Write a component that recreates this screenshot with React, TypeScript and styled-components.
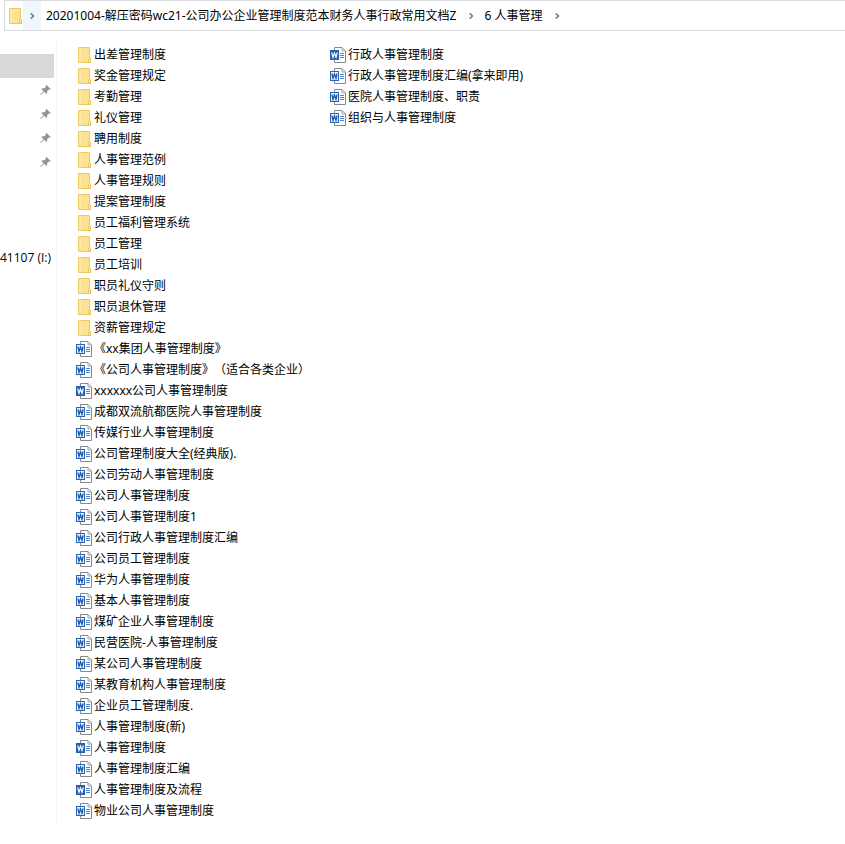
import React from "react";
import styled, { createGlobalStyle } from "styled-components";

const GlobalStyle = createGlobalStyle`
  * { box-sizing: border-box; }
  body {
    margin: 0;
    background: #fff;
    color: #000;
    font: 12px/20px "Noto Sans", "Noto Sans CJK SC", sans-serif;
    text-spacing-trim: space-all;
    overflow-x: hidden;
  }
  button, a {
    font: inherit;
    color: inherit;
    background: none;
    border: 0;
    padding: 0;
    text-decoration: none;
    white-space: nowrap;
    cursor: default;
  }
  button { text-spacing-trim: space-all; }
  ul { list-style: none; margin: 0; padding: 0; }
  svg { display: block; flex: none; }
`;

const Window = styled.div`
  display: flex;
  flex-direction: column;
`;

const AddressBar = styled.nav`
  display: flex;
  align-items: center;
  height: 31px;
  margin-left: 4px;
  padding-left: 2px;
  border: 1px solid #d9dbde;
  border-right: 0;
`;

const ChevronButton = styled.button<{ $active?: boolean }>`
  display: flex;
  align-items: center;
  justify-content: center;
  width: ${(p) => (p.$active ? 18 : 25)}px;
  height: 29px;
  background: ${(p) => (p.$active ? "#f0f6fd" : "none")};
`;

const Crumb = styled.button<{ $first?: boolean }>`
  padding-left: ${(p) => (p.$first ? 5 : 0)}px;
  padding-right: 3px;
`;

const Body = styled.div`
  display: flex;
  margin-top: 8px;
`;

const Sidebar = styled.aside`
  flex: none;
  width: 57px;
  padding-top: 15px;
  border-right: 1px solid #f3f4f5;
  overflow: hidden;
`;

const SidebarRow = styled.a<{ $selected?: boolean }>`
  display: flex;
  align-items: center;
  justify-content: flex-end;
  height: 24px;
  margin-right: 2px;
  padding-right: 3px;
  font-family: "Open Sans", sans-serif;
  background: ${(p) => (p.$selected ? "#d9d9d9" : "none")};
`;

const Files = styled.ul`
  display: grid;
  grid-auto-flow: column;
  grid-template-rows: repeat(37, 21px);
  grid-auto-columns: 254px;
  padding: 5px 0 3px 19px;
`;

const FileButton = styled.button`
  display: flex;
  align-items: center;
  gap: 2px;
  height: 21px;
`;

const Chevron = () => (
  <svg width="7" height="8" viewBox="0 0 7 8" fill="none" stroke="#777" strokeWidth="1.5">
    <path d="M1.7 1.2 L4.5 4 L1.7 6.8" />
  </svg>
);

const FolderIcon = () => (
  <svg width="16" height="16" viewBox="0 0 16 16">
    <path d="M2.5.5H13.5V11L14.5 11.5V15.5H2.5Z" fill="#fde391" stroke="#ecca62" />
    <path d="M3 1H5V15H3Z" fill="#ffeaa8" />
    <path d="M12.5 15.5V11.5L13.5 10.5L14.5 11.5V15.5Z" fill="#ffe99f" stroke="#e3be50" strokeWidth=".8" />
  </svg>
);

const WordIcon = ({ legacy }: { legacy: boolean }) => (
  <svg width="16" height="16" viewBox="0 0 16 16">
    <path d="M4.5.5H12L15.5 4V15.5H4.5Z" fill="#fff" stroke="#85898e" />
    <path d="M12 1V4H15" fill="none" stroke="#a2a5a9" />
    <path d="M10 6.5H14M10 8.5H14M10 10.5H14" stroke="#4a83c9" />
    {legacy ? (
      <>
        <rect x=".5" y="3.5" width="8" height="9" fill="#e9f1fa" stroke="#2b65b5" />
        <path d="M1.9 5.5L3 10.3L4.5 6L6 10.3L7.1 5.5" fill="none" stroke="#1f58a9" strokeWidth="1.3" />
      </>
    ) : (
      <>
        <rect y="3" width="9" height="10" fill="#2360b5" />
        <path d="M1.7 5.5L3 10.3L4.5 6L6 10.3L7.3 5.5" fill="none" stroke="#fff" strokeWidth="1.2" />
      </>
    )}
  </svg>
);

const PinIcon = () => (
  <svg width="11" height="12" viewBox="0 0 12 12">
    <path d="M7 .6L11.4 5L10.2 5.6L9.4 5.3L7.6 7.3L7.5 9.5L6.6 9.9L4.4 7.7L1 11.2L.6 11.4L.8 11L4.1 7.4L2 5.3L2.5 4.4L4.8 4.3L6.7 2.6L6.3 1.7Z" fill="#89939d" stroke="#89939d" strokeWidth=".4" />
  </svg>
);

type Kind = "folder" | "doc" | "docx";

const folders = [
  "出差管理制度", "奖金管理规定", "考勤管理", "礼仪管理", "聘用制度",
  "人事管理范例", "人事管理规则", "提案管理制度", "员工福利管理系统",
  "员工管理", "员工培训", "职员礼仪守则", "职员退休管理", "资薪管理规定",
];

const documents: [string, Kind][] = [
  ["《xx集团人事管理制度》", "doc"],
  ["《公司人事管理制度》（适合各类企业）", "doc"],
  ["xxxxxx公司人事管理制度", "docx"],
  ["成都双流航都医院人事管理制度", "doc"],
  ["传媒行业人事管理制度", "doc"],
  ["公司管理制度大全(经典版).", "doc"],
  ["公司劳动人事管理制度", "doc"],
  ["公司人事管理制度", "doc"],
  ["公司人事管理制度1", "doc"],
  ["公司行政人事管理制度汇编", "doc"],
  ["公司员工管理制度", "doc"],
  ["华为人事管理制度", "doc"],
  ["基本人事管理制度", "doc"],
  ["煤矿企业人事管理制度", "doc"],
  ["民营医院-人事管理制度", "doc"],
  ["某公司人事管理制度", "doc"],
  ["某教育机构人事管理制度", "doc"],
  ["企业员工管理制度.", "doc"],
  ["人事管理制度(新)", "doc"],
  ["人事管理制度", "docx"],
  ["人事管理制度汇编", "doc"],
  ["人事管理制度及流程", "docx"],
  ["物业公司人事管理制度", "doc"],
  ["行政人事管理制度", "docx"],
  ["行政人事管理制度汇编(拿来即用)", "doc"],
  ["医院人事管理制度、职责", "doc"],
  ["组织与人事管理制度", "doc"],
];

const entries: [string, Kind][] = [
  ...folders.map((name): [string, Kind] => [name, "folder"]),
  ...documents,
];

const sidebarRows = ["selected", "pin", "pin", "pin", "pin", "", "", "", "drive"];

export default function App() {
  return (
    <Window>
      <GlobalStyle />
      <AddressBar>
        <FolderIcon />
        <ChevronButton $active aria-label="展开"><Chevron /></ChevronButton>
        <Crumb $first>20201004-解压密码wc21-公司办公企业管理制度范本财务人事行政常用文档Z</Crumb>
        <ChevronButton aria-label="展开"><Chevron /></ChevronButton>
        <Crumb>6 人事管理</Crumb>
        <ChevronButton aria-label="展开"><Chevron /></ChevronButton>
      </AddressBar>
      <Body>
        <Sidebar>
          {sidebarRows.map((row, i) => (
            <SidebarRow key={i} href="#" $selected={row === "selected"}>
              {row === "pin" && <PinIcon />}
              {row === "drive" && "41107 (I:)"}
            </SidebarRow>
          ))}
        </Sidebar>
        <Files>
          {entries.map(([name, kind]) => (
            <li key={name}>
              <FileButton>
                {kind === "folder" ? <FolderIcon /> : <WordIcon legacy={kind === "doc"} />}
                {name}
              </FileButton>
            </li>
          ))}
        </Files>
      </Body>
    </Window>
  );
}
